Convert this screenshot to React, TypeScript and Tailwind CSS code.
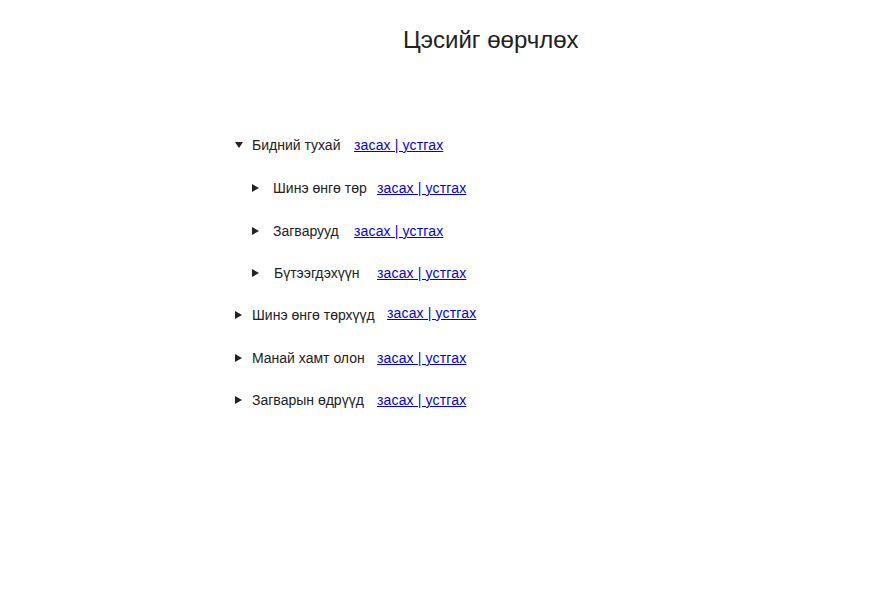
import React from 'react';

type Row = {
  label: string;
  open?: boolean;
  rowClass: string;
  textClass: string;
  linkClass?: string;
};

const rows: Row[] = [
  { label: 'Бидний тухай', open: true, rowClass: 'pl-[235px]', textClass: 'ml-[9px] w-[102px]' },
  { label: 'Шинэ өнгө төр', rowClass: 'mt-[23px] pl-[252px]', textClass: 'ml-[14px] w-[104px]' },
  { label: 'Загварууд', rowClass: 'mt-[23px] pl-[252px]', textClass: 'ml-[14px] w-[81px]' },
  { label: 'Бүтээгдэхүүн', rowClass: 'mt-[22px] pl-[252px]', textClass: 'ml-[15px] w-[103px]' },
  { label: 'Шинэ өнгө төрхүүд', rowClass: 'mt-[22px] pl-[235px]', textClass: 'ml-[10px] w-[135px]', linkClass: '-mt-[5px]' },
  { label: 'Манай хамт олон', rowClass: 'mt-[23px] pl-[235px]', textClass: 'ml-[10px] w-[125px]' },
  { label: 'Загварын өдрүүд', rowClass: 'mt-[22px] pl-[235px]', textClass: 'ml-[10px] w-[125px]' },
];

function Marker({ open }: { open?: boolean }) {
  if (open) {
    return (
      <svg width="8" height="6" viewBox="0 0 8 6" className="shrink-0">
        <path d="M0 0 L8 0 L4 6 Z" fill="#222" />
      </svg>
    );
  }
  return (
    <svg width="7" height="8" viewBox="0 0 7 8" className="shrink-0">
      <path d="M0 0 L7 4 L0 8 Z" fill="#222" />
    </svg>
  );
}

export default function App() {
  return (
    <div className="w-[885px] h-[595px] bg-white text-[#222] font-['Liberation_Sans',Arial,sans-serif]">
      <h1 className="pt-[26px] pl-[403px] text-[24px] leading-[28px] text-[#222]">Цэсийг өөрчлөх</h1>

      {/* menu tree */}
      <div className="mt-[81px] flex flex-col">
        {rows.map((r) => (
          <div key={r.label} className={`flex h-[20px] items-center ${r.rowClass}`}>
            <Marker open={r.open} />
            <span className={`text-[14px] leading-[16px] ${r.textClass}`}>{r.label}</span>
            <a href="#" className={`text-[14px] leading-[16px] tracking-[0.15px] text-[#0000ee] underline ${r.linkClass ?? ''}`}>
              засах | устгах
            </a>
          </div>
        ))}
      </div>
    </div>
  );
}
